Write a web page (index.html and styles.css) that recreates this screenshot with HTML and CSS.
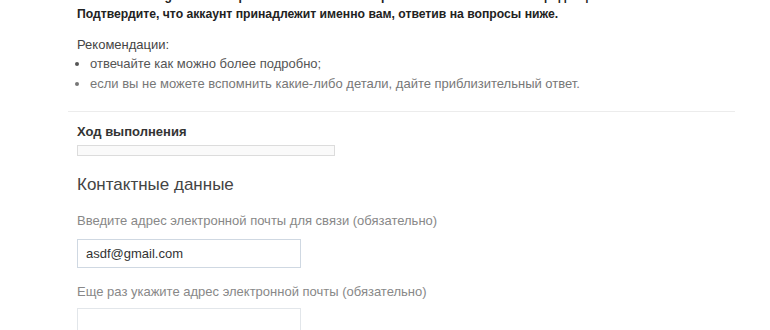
FILE: index.html
```html
<!DOCTYPE html>
<html lang="ru">
<head>
<meta charset="utf-8">
<link rel="stylesheet" href="styles.css">
</head>
<body>
<div class="page">
  <div class="intro">
    <p class="lead">Компания Google очень серьезно относится к вопросам безопасности и конфиденциальности.</p>
    <p class="lead">Подтвердите, что аккаунт принадлежит именно вам, ответив на вопросы ниже.</p>
    <p class="rec-title">Рекомендации:</p>
    <ul class="rec-list">
      <li>отвечайте как можно более подробно;</li>
      <li class="faint">если вы не можете вспомнить какие-либо детали, дайте приблизительный ответ.</li>
    </ul>
  </div>
  <hr class="divider">
  <div class="form">
    <div class="progress-label">Ход выполнения</div>
    <div class="progress"></div>
    <h2 class="section-title">Контактные данные</h2>
    <label class="field-label">Введите адрес электронной почты для связи (обязательно)</label>
    <div class="input">asdf@gmail.com</div>
    <label class="field-label second">Еще раз укажите адрес электронной почты (обязательно)</label>
    <div class="input second"></div>
  </div>
</div>
</body>
</html>
```
FILE: styles.css
```css
html, body {
  margin: 0;
  padding: 0;
  background: #fff;
}
body {
  font-family: "Liberation Sans", Arial, sans-serif;
  font-size: 13px;
  color: #333;
  overflow: hidden;
  height: 330px;
}
.page {
  margin-top: -13px;
}
.intro {
  padding-left: 77px;
}
.lead {
  margin: 0;
  font-weight: bold;
  font-size: 12.2px;
  color: #222;
  line-height: 18px;
}
.rec-title {
  margin: 13px 0 0;
  color: #444;
  line-height: 18px;
}
.rec-list {
  margin: 0;
  padding: 0 0 0 13px;
  list-style: disc;
  color: #555;
}
.rec-list li {
  line-height: 21px;
}
.rec-list li:first-child {
  line-height: 19px;
}
.rec-list .faint {
  color: #777;
}
.divider {
  margin: 17px 35px 0 68px;
  border: 0;
  border-top: 1px solid #ececec;
  height: 0;
}
.form {
  padding-left: 77px;
}
.progress-label {
  margin-top: 12px;
  font-weight: bold;
  color: #333;
  line-height: 16px;
}
.progress {
  margin-top: 5px;
  width: 256px;
  height: 9px;
  border: 1px solid #dcdcdc;
  background: #fafafa;
}
.section-title {
  margin: 18px 0 0;
  font-size: 17px;
  font-weight: normal;
  color: #444;
  line-height: 22px;
}
.field-label {
  display: block;
  margin-top: 17px;
  color: #888;
  line-height: 16px;
}
.field-label.second {
  margin-top: 16px;
}
.input {
  margin-top: 10px;
  width: 214px;
  height: 27px;
  border: 1px solid #cfd8e2;
  padding: 0 0 0 8px;
  line-height: 27px;
  color: #333;
  font-size: 13px;
}
.input.second {
  margin-top: 8px;
  border-color: #e2e6ea;
}
```
